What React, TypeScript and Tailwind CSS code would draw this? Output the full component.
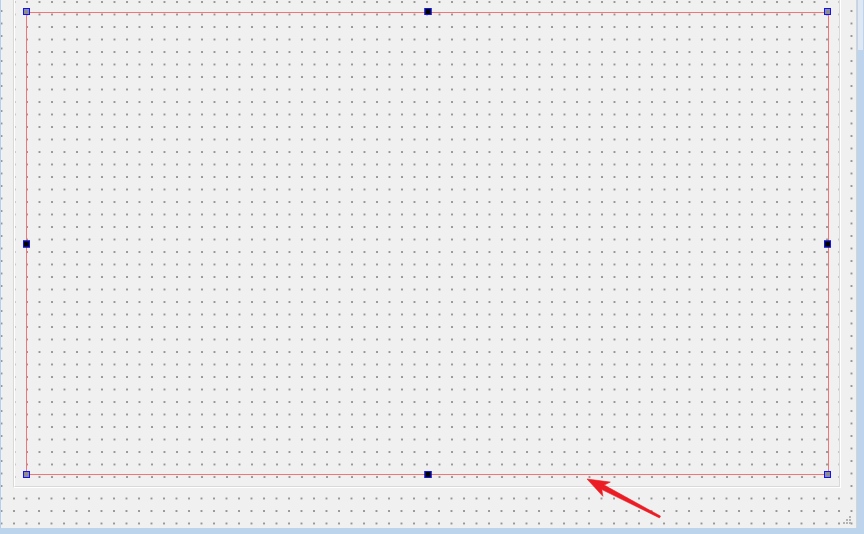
import React from "react";

function Handle({ pos, corner }: { pos: string; corner?: boolean }) {
  return (
    <div
      className={`absolute z-10 w-[7px] h-[7px] border border-[#1010ff] ${corner ? "bg-[#8e8e8e]" : "bg-black"} ${pos}`}
    />
  );
}

export default function App() {
  return (
    <div className="relative w-[864px] h-[534px] overflow-hidden bg-[#f0f0f0] flex flex-col font-['Liberation_Sans',sans-serif]">
      <div className="flex h-[528px]">
        {/* left window edge */}
        <div className="w-[1px] bg-[#b6cfea]" />
        {/* form canvas */}
        <div className="relative flex-1 bg-[#f0f0f0] bg-[radial-gradient(circle_at_1px_1px,#888888_0.6px,transparent_1.2px)] bg-[size:12.5px_12.5px] bg-[position:12px_10px]">
          <div className="ml-[12px] w-[828px] h-[488px] border-l border-r border-b border-l-[#d9d9d9] border-r-white border-b-white">
            <div className="h-full border-l border-r border-b border-l-white border-r-[#d9d9d9] border-b-[#d9d9d9] bg-[#f0f0f0] bg-[radial-gradient(circle_at_1px_1px,#888888_0.6px,transparent_1.2px)] bg-[size:12.5px_12.5px] bg-[position:11px_1px] pl-[11px] pt-[12px] pr-[10px] pb-[11px] flex">
              <div className="relative flex-1 border border-[#f27676]">
                <Handle corner pos="left-[-4px] top-[-5px]" />
                <Handle pos="left-1/2 -translate-x-1/2 top-[-5px]" />
                <Handle corner pos="right-[-3px] top-[-5px]" />
                <Handle pos="left-[-4px] top-1/2 -translate-y-1/2" />
                <Handle pos="right-[-3px] top-1/2 -translate-y-1/2" />
                <Handle corner pos="left-[-4px] bottom-[-4px]" />
                <Handle pos="left-1/2 -translate-x-1/2 bottom-[-4px]" />
                <Handle corner pos="right-[-3px] bottom-[-4px]" />
              </div>
            </div>
          </div>
          {/* size grip */}
          <svg className="absolute right-[3px] bottom-[1px]" width="12" height="12" viewBox="0 0 12 12">
            <rect x="8" y="1" width="2" height="2" fill="#b4b4b4" />
            <rect x="5" y="4" width="2" height="2" fill="#b4b4b4" />
            <rect x="8" y="4" width="2" height="2" fill="#b4b4b4" />
            <rect x="2" y="7" width="2" height="2" fill="#b4b4b4" />
            <rect x="5" y="7" width="2" height="2" fill="#b4b4b4" />
            <rect x="8" y="7" width="2" height="2" fill="#b4b4b4" />
          </svg>
        </div>
        {/* right edge */}
        <div className="w-[8px] flex border-l border-l-[#d4d4d4]">
          <div className="flex-1 bg-[#bdd4ec] flex flex-col">
            <div className="h-[50px] mx-[1px] bg-[#dde8f4]" />
          </div>
        </div>
      </div>
      <div className="h-[6px] bg-[#bcd4ec]" />
      {/* annotation arrow */}
      <svg className="absolute left-[580px] top-[474px]" width="90" height="50" viewBox="0 0 90 50">
        <polygon
          points="7,5 30.3,8.1 24.2,11.1 80.5,42.1 79.5,43.9 21.8,15.5 22.9,22.3"
          fill="#ec1c24"
          stroke="#ec1c24"
          strokeWidth="0.6"
          strokeLinejoin="round"
        />
      </svg>
    </div>
  );
}
